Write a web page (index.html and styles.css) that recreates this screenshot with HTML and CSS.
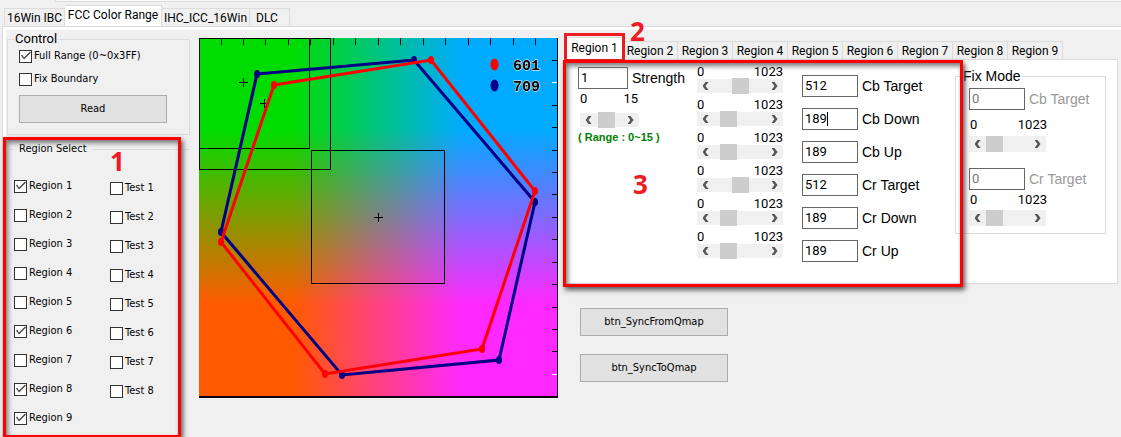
FILE: index.html
```html
<!DOCTYPE html>
<html lang="en">
<head>
<meta charset="utf-8">
<title>FCC Color Range</title>
<link rel="stylesheet" href="styles.css">
</head>
<body>
<div class="top-strip"></div>
<nav class="tabs main-tabs" role="tablist">
  <button class="tab" role="tab">16Win IBC</button>
  <button class="tab active" role="tab" aria-selected="true">FCC Color Range</button>
  <button class="tab" role="tab">IHC_ICC_16Win</button>
  <button class="tab" role="tab">DLC</button>
</nav>
<main class="page">
  <div class="workspace">
    <section class="sidebar">
      <fieldset class="group control">
        <legend>Control</legend>
        <label class="check"><input type="checkbox" checked>Full Range (0~0x3FF)</label>
        <label class="check"><input type="checkbox">Fix Boundary</label>
        <button class="btn">Read</button>
      </fieldset>
      <div class="select-wrap">
        <fieldset class="group regions">
          <legend>Region Select</legend>
          <div class="check-columns">
            <div class="check-list">
              <label class="check"><input type="checkbox" checked>Region 1</label>
              <label class="check"><input type="checkbox">Region 2</label>
              <label class="check"><input type="checkbox">Region 3</label>
              <label class="check"><input type="checkbox">Region 4</label>
              <label class="check"><input type="checkbox">Region 5</label>
              <label class="check"><input type="checkbox" checked>Region 6</label>
              <label class="check"><input type="checkbox">Region 7</label>
              <label class="check"><input type="checkbox" checked>Region 8</label>
              <label class="check"><input type="checkbox" checked>Region 9</label>
            </div>
            <div class="check-list tests">
              <label class="check"><input type="checkbox">Test 1</label>
              <label class="check"><input type="checkbox">Test 2</label>
              <label class="check"><input type="checkbox">Test 3</label>
              <label class="check"><input type="checkbox">Test 4</label>
              <label class="check"><input type="checkbox">Test 5</label>
              <label class="check"><input type="checkbox">Test 6</label>
              <label class="check"><input type="checkbox">Test 7</label>
              <label class="check"><input type="checkbox">Test 8</label>
            </div>
          </div>
        </fieldset>
        <span class="mark mark-select"></span>
        <span class="num num-one">1</span>
      </div>
    </section>

    <svg class="plot" width="359" height="360" viewBox="0 0 359 360" role="img" aria-label="Color plane">
      <defs>
        <linearGradient id="gv" gradientUnits="userSpaceOnUse" x1="0" y1="92" x2="0" y2="266">
          <stop offset="0" stop-color="rgb(0,170,0)"/><stop offset="1" stop-color="rgb(255,40,0)"/>
        </linearGradient>
        <linearGradient id="gh" gradientUnits="userSpaceOnUse" x1="94" y1="0" x2="264" y2="0">
          <stop offset="0" stop-color="rgb(0,50,0)"/><stop offset="1" stop-color="rgb(0,0,255)"/>
        </linearGradient>
      </defs>
      <g class="plane">
        <rect width="359" height="360" fill="url(#gv)"/>
        <rect class="add" width="359" height="360" fill="url(#gh)"/>
      </g>
      <path class="thin" d="M.5 131V.5H131.5M110.5 0V110.5H0M131.5 0V131.5H0M112.5 112.5H245.5V245.5H112.5Z"/>
      <path class="thin" d="M40 44.5H49M44.5 40V49M61 65.5H70M65.5 61V70M175 179.5H184M179.5 175V184"/>
      <path class="thin" d="M22.5 0V7M44.5 0V7M66.5 0V7M89.5 0V7M111.5 0V7M134.5 0V7M156.5 0V7M179.5 0V7M201.5 0V7M224.5 0V7M246.5 0V7M269.5 0V7M291.5 0V7M314.5 0V7M336.5 0V7"/>
      <path class="thin" d="M353 22.5H359M353 67.5H359M353 89.5H359M353 112.5H359M353 134.5H359M353 156.5H359M353 179.5H359M353 201.5H359M353 224.5H359M353 246.5H359M353 269.5H359M353 291.5H359M353 313.5H359"/>
      <path d="M353 44.5H358M353 336.5H358" stroke="#fff"/>
      <path d="M358.500 0V360" stroke="#000"/>
      <path d="M0 359H359" stroke="#100010" stroke-width="2"/>
      <g fill="#000084">
        <path class="gamut" stroke="#000084" d="M58 36L215 22L336 164L300 322L143 337L22 194Z"/>
        <ellipse cx="58" cy="36" rx="3" ry="4"/><ellipse cx="215" cy="22" rx="3" ry="4"/><ellipse cx="336" cy="164" rx="3" ry="4"/>
        <ellipse cx="300" cy="322" rx="3" ry="4"/><ellipse cx="143" cy="337" rx="3" ry="4"/><ellipse cx="22" cy="194" rx="3" ry="4"/>
        <ellipse cx="295.500" cy="47.500" rx="4" ry="6"/>
      </g>
      <g fill="#f00">
        <path class="gamut" stroke="#f00" d="M75 47L232 22L336 153L283 311L126 336L22 204Z"/>
        <ellipse cx="75" cy="47" rx="3" ry="4"/><ellipse cx="232" cy="22" rx="3" ry="4"/><ellipse cx="336" cy="153" rx="3" ry="4"/>
        <ellipse cx="283" cy="311" rx="3" ry="4"/><ellipse cx="126" cy="336" rx="3" ry="4"/><ellipse cx="22" cy="204" rx="3" ry="4"/>
        <ellipse cx="295.500" cy="26.500" rx="4" ry="6"/>
      </g>
      <text class="legend" x="314" y="32">601</text>
      <text class="legend" x="314" y="53">709</text>
    </svg>

    <section class="detail">
      <nav class="tabs region-tabs" role="tablist">
        <button class="tab active" role="tab" aria-selected="true">Region 1<span class="mark mark-tab"></span><span class="num num-two">2</span></button>
        <button class="tab" role="tab">Region 2</button>
        <button class="tab" role="tab">Region 3</button>
        <button class="tab" role="tab">Region 4</button>
        <button class="tab" role="tab">Region 5</button>
        <button class="tab" role="tab">Region 6</button>
        <button class="tab" role="tab">Region 7</button>
        <button class="tab" role="tab">Region 8</button>
        <button class="tab" role="tab">Region 9</button>
      </nav>
      <div class="panel">
        <div class="editor">
          <div class="strength">
            <div class="field"><input class="box" id="st" type="text" value="1"><label for="st">Strength</label></div>
            <div class="ends"><span>0</span><span>15</span></div>
            <div class="scroll"><button class="arrow prev" aria-label="Less"></button><input type="range" min="0" max="15" value="1" aria-label="Strength"><button class="arrow next" aria-label="More"></button></div>
            <p class="range-note">( Range : 0~15 )</p>
          </div>
          <div class="sliders">
            <div class="slider"><div class="ends"><span>0</span><span>1023</span></div><div class="scroll"><button class="arrow prev" aria-label="Less"></button><input type="range" max="1023" value="512" aria-label="Cb Target"><button class="arrow next" aria-label="More"></button></div></div>
            <div class="slider"><div class="ends"><span>0</span><span>1023</span></div><div class="scroll"><button class="arrow prev" aria-label="Less"></button><input type="range" max="1023" value="189" aria-label="Cb Down"><button class="arrow next" aria-label="More"></button></div></div>
            <div class="slider"><div class="ends"><span>0</span><span>1023</span></div><div class="scroll"><button class="arrow prev" aria-label="Less"></button><input type="range" max="1023" value="189" aria-label="Cb Up"><button class="arrow next" aria-label="More"></button></div></div>
            <div class="slider"><div class="ends"><span>0</span><span>1023</span></div><div class="scroll"><button class="arrow prev" aria-label="Less"></button><input type="range" max="1023" value="512" aria-label="Cr Target"><button class="arrow next" aria-label="More"></button></div></div>
            <div class="slider"><div class="ends"><span>0</span><span>1023</span></div><div class="scroll"><button class="arrow prev" aria-label="Less"></button><input type="range" max="1023" value="189" aria-label="Cr Down"><button class="arrow next" aria-label="More"></button></div></div>
            <div class="slider"><div class="ends"><span>0</span><span>1023</span></div><div class="scroll"><button class="arrow prev" aria-label="Less"></button><input type="range" max="1023" value="189" aria-label="Cr Up"><button class="arrow next" aria-label="More"></button></div></div>
          </div>
          <div class="values">
            <div class="field"><input class="box" id="v1" type="text" value="512"><label for="v1">Cb Target</label></div>
            <div class="field"><input class="box" id="v2" type="text" value="189"><label for="v2">Cb Down</label><span class="caret"></span></div>
            <div class="field"><input class="box" id="v3" type="text" value="189"><label for="v3">Cb Up</label></div>
            <div class="field"><input class="box" id="v4" type="text" value="512"><label for="v4">Cr Target</label></div>
            <div class="field"><input class="box" id="v5" type="text" value="189"><label for="v5">Cr Down</label></div>
            <div class="field"><input class="box" id="v6" type="text" value="189"><label for="v6">Cr Up</label></div>
          </div>
        </div>
        <fieldset class="group fix">
          <legend>Fix Mode</legend>
          <div class="field"><input class="box" id="f1" type="text" value="0" disabled><label for="f1">Cb Target</label></div>
          <div class="ends"><span>0</span><span>1023</span></div>
          <div class="scroll"><button class="arrow prev" aria-label="Less"></button><input type="range" max="1023" value="0" aria-label="Fixed Cb"><button class="arrow next" aria-label="More"></button></div>
          <div class="field second"><input class="box" id="f2" type="text" value="0" disabled><label for="f2">Cr Target</label></div>
          <div class="ends"><span>0</span><span>1023</span></div>
          <div class="scroll"><button class="arrow prev" aria-label="Less"></button><input type="range" max="1023" value="0" aria-label="Fixed Cr"><button class="arrow next" aria-label="More"></button></div>
        </fieldset>
        <span class="mark mark-editor"></span>
        <span class="num num-three">3</span>
      </div>
      <div class="actions">
        <button class="btn">btn_SyncFromQmap</button>
        <button class="btn">btn_SyncToQmap</button>
      </div>
    </section>
  </div>
</main>
</body>
</html>
```
FILE: styles.css
```css
* { box-sizing: border-box; }
body {
  margin: 0;
  background: #f0f0f0;
  color: #000;
  font: 11px/14px "DejaVu Sans Condensed", "Noto Sans", "Open Sans", sans-serif;
  overflow: hidden;
}
button, input { font: inherit; color: inherit; margin: 0; }
fieldset { margin: 0; padding: 0; min-width: 0; }

.top-strip { height: 2px; margin-left: 55px; border: solid #dcdcdc; border-width: 0 0 1px 1px; background: #f8f8f8; }

/* tabs */
.tabs { display: flex; align-items: flex-end; position: relative; }
.tab {
  height: 18px;
  padding: 0;
  border: 1px solid #dcdcdc;
  border-width: 1px 1px 0 0;
  background: #f0f0f0;
  font: 12px/16px Roboto, "Liberation Sans", sans-serif;
  white-space: nowrap;
}
.tab:first-child { border-left-width: 1px; }
.tab.active { height: 21px; background: #fff; padding-bottom: 2px; }
.main-tabs { padding: 3px 0 0 4px; }
.main-tabs .tab:nth-child(1) { width: 61px; }
.main-tabs .tab:nth-child(2) { width: 97px; }
.main-tabs .tab:nth-child(3) { width: 88px; }
.main-tabs .tab:nth-child(4) { width: 40px; padding-left: 6px; text-align: left; }

.page { margin-left: 2px; padding: 3px 0 0 3px; background: #fff; border: solid #dcdcdc; border-width: 1px 0 0 1px; }
.workspace { display: flex; align-items: flex-start; background: #f0f0f0; min-height: 408px; }

/* left column */
.sidebar { width: 193px; flex: none; padding: 2px 9px 0 1px; }
.group { border: 1px solid #dcdcdc; }
.group legend { padding: 0 1px; }
.control { padding: 3px 11px 11px; }
.control legend { margin-left: -5px; font: 13px/14px Roboto, "Liberation Sans", sans-serif; }
.control .check { margin-bottom: 9px; }
.control .btn { display: block; }
.check { display: flex; align-items: center; gap: 2px; height: 14px; white-space: nowrap; }
.check input {
  appearance: none;
  width: 13px;
  height: 13px;
  flex: none;
  background: #fff;
  border: 1px solid #333;
}
.check input:checked::after {
  content: "";
  display: block;
  width: 11px;
  height: 11px;
  background: #444;
  clip-path: polygon(1px 5px, 2px 4px, 4px 7px, 10px 1px, 11px 2px, 4px 9px);
}
.btn {
  width: 148px;
  height: 28px;
  padding: 0;
  border: 1px solid #adadad;
  background: #e1e1e1;
}
.select-wrap { position: relative; margin-top: 7px; }
.regions { border-width: 1px 0 0; }
.regions legend { margin-left: 7px; padding: 0 5px; }
.check-columns { display: flex; padding: 23px 0 0 7px; }
.check-list { display: grid; grid-auto-rows: 29px; flex: none; width: 96px; }
.check-list.tests { padding-top: 2px; width: 60px; }

/* color plane */
.plot { flex: none; margin-top: 8px; }
.plane { isolation: isolate; }
.add { mix-blend-mode: plus-lighter; }
.thin { fill: none; stroke: #000; }
.gamut { fill: none; stroke-width: 3; }
.legend { font: bold 15px "Liberation Mono", monospace; fill: #000; stroke: #fff; stroke-width: 1px; paint-order: stroke; }

/* right column */
.detail { flex: 1; min-width: 0; padding: 7px 3px 0 6px; }
.region-tabs { padding-left: 2px; }
.region-tabs .tab { width: 55px; }
.region-tabs .tab.active { width: 57px; height: 22px; position: relative; }
.panel { position: relative; display: flex; align-items: flex-start; min-height: 225px; background: #fff; border: 1px solid #dcdcdc; }
.editor { display: flex; width: 390px; flex: none; padding-top: 5px; }
.strength { width: 132px; padding: 2px 0 0 13px; }
.strength .box { width: 50px; }
.field { display: flex; align-items: center; gap: 4px; height: 22px; position: relative; font: 14px/16px "Liberation Sans", sans-serif; white-space: nowrap; }
.box { width: 56px; height: 22px; border: 1px solid #666; background: #fff; padding: 0 2px 2px; border-radius: 0; font: 13px/18px Roboto, "Liberation Sans", sans-serif; }
.box:disabled { color: #777; }
.ends { display: flex; justify-content: space-between; font: 13px/14px Roboto, "Liberation Sans", sans-serif; }
.scroll { display: flex; height: 14px; background: #f0f0f0; }
.scroll input {
  appearance: none;
  flex: 1;
  width: 0;
  height: 100%;
  background: transparent;
}
.scroll input::-webkit-slider-thumb { appearance: none; width: 17px; height: 16px; background: #cdcdcd; border-radius: 0; }
.arrow { width: 17px; height: 100%; flex: none; padding: 0; border: 0; background: transparent; display: grid; place-items: center; }
.arrow::before { content: ""; width: 6px; height: 8px; background: #555; clip-path: polygon(3px 0, 6px 0, 3px 4px, 6px 8px, 3px 8px, 0 4px); }
.arrow.next::before { clip-path: polygon(0 0, 3px 0, 6px 4px, 3px 8px, 0 8px, 3px 4px); }
.strength .ends { width: 60px; padding: 3px 0 0 2px; margin-bottom: 7px; }
.strength .scroll { width: 59px; margin-left: 2px; }
.range-note { margin: 3px 0 0; font: bold 11px/14px "Liberation Sans", sans-serif; color: #008000; white-space: nowrap; }
.sliders { width: 86px; display: grid; grid-auto-rows: 33px; }
.values { display: grid; grid-auto-rows: 33px; padding: 10px 0 0 19px; }
.caret { position: absolute; left: 25px; top: 4px; width: 1px; height: 14px; background: #000; }
.fix { flex: 1; max-width: 152px; margin: 8px 11px 0 0; padding: 4px 0 7px 13px; }
.fix legend { margin-left: -7px; font: 14px/16px "Liberation Sans", sans-serif; }
.fix .field { color: #999; }
.fix .field.second { margin-top: 16px; }
.fix .ends { width: 78px; margin: 8px 0 4px; padding-left: 1px; }
.fix .second + .ends { margin: 3px 0; }
.fix .scroll { width: 77px; height: 16px; }
.actions { display: grid; gap: 18px; padding: 24px 0 0 16px; justify-items: start; }

/* callouts */
.mark { position: absolute; pointer-events: none; border: 3px solid #f00; z-index: 1; }
.mark-select { inset: -5px 9px 2px -4px; box-shadow: 2px 3px 5px #555, inset 2px 3px 5px #777; }
.mark-tab { inset: -5px -3px -3px; border-color: #ed1c24; }
.mark-editor { left: -2px; top: 0; bottom: -4px; width: 400px; box-shadow: 2px 3px 5px #555, inset 2px 3px 5px #777; }
.num { position: absolute; z-index: 2; font: bold 26px/26px "Noto Sans", sans-serif; color: #ed1c24; }
.num-one { left: 103px; top: 6px; }
.num-two { left: 63px; top: -20px; }
.num-three { left: 68px; top: 111px; }
```
